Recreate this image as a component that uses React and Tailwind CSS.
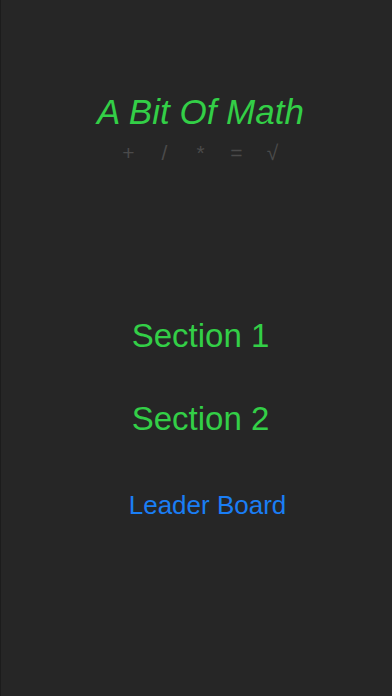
export default function App() {
  const symbols = ["+", "/", "*", "=", "√"];

  return (
    <div
      className="min-h-[696px] w-full bg-[#262626] border-l border-[#1c1c1c] pl-2 flex flex-col items-center"
      style={{ fontFamily: '"Liberation Sans", Arial, sans-serif' }}
    >
      {/* Title */}
      <h1 className="mt-[92px] text-[35px] leading-[40px] italic text-[#33cf47]">
        A Bit Of Math
      </h1>

      {/* Operators */}
      <div className="mt-[9px] flex text-[21px] leading-[24px] font-light text-[#4a4a4a]">
        {symbols.map((s) => (
          <span key={s} className="w-9 text-center">
            {s}
          </span>
        ))}
      </div>

      {/* Menu */}
      <button className="mt-[151px] text-[33px] leading-[40px] text-[#33cf47]">
        Section 1
      </button>
      <button className="mt-[43px] text-[33px] leading-[40px] text-[#33cf47]">
        Section 2
      </button>
      <button className="mt-[51px] ml-[14px] text-[26px] leading-[30px] text-[#1a7ef5]">
        Leader Board
      </button>
    </div>
  );
}
